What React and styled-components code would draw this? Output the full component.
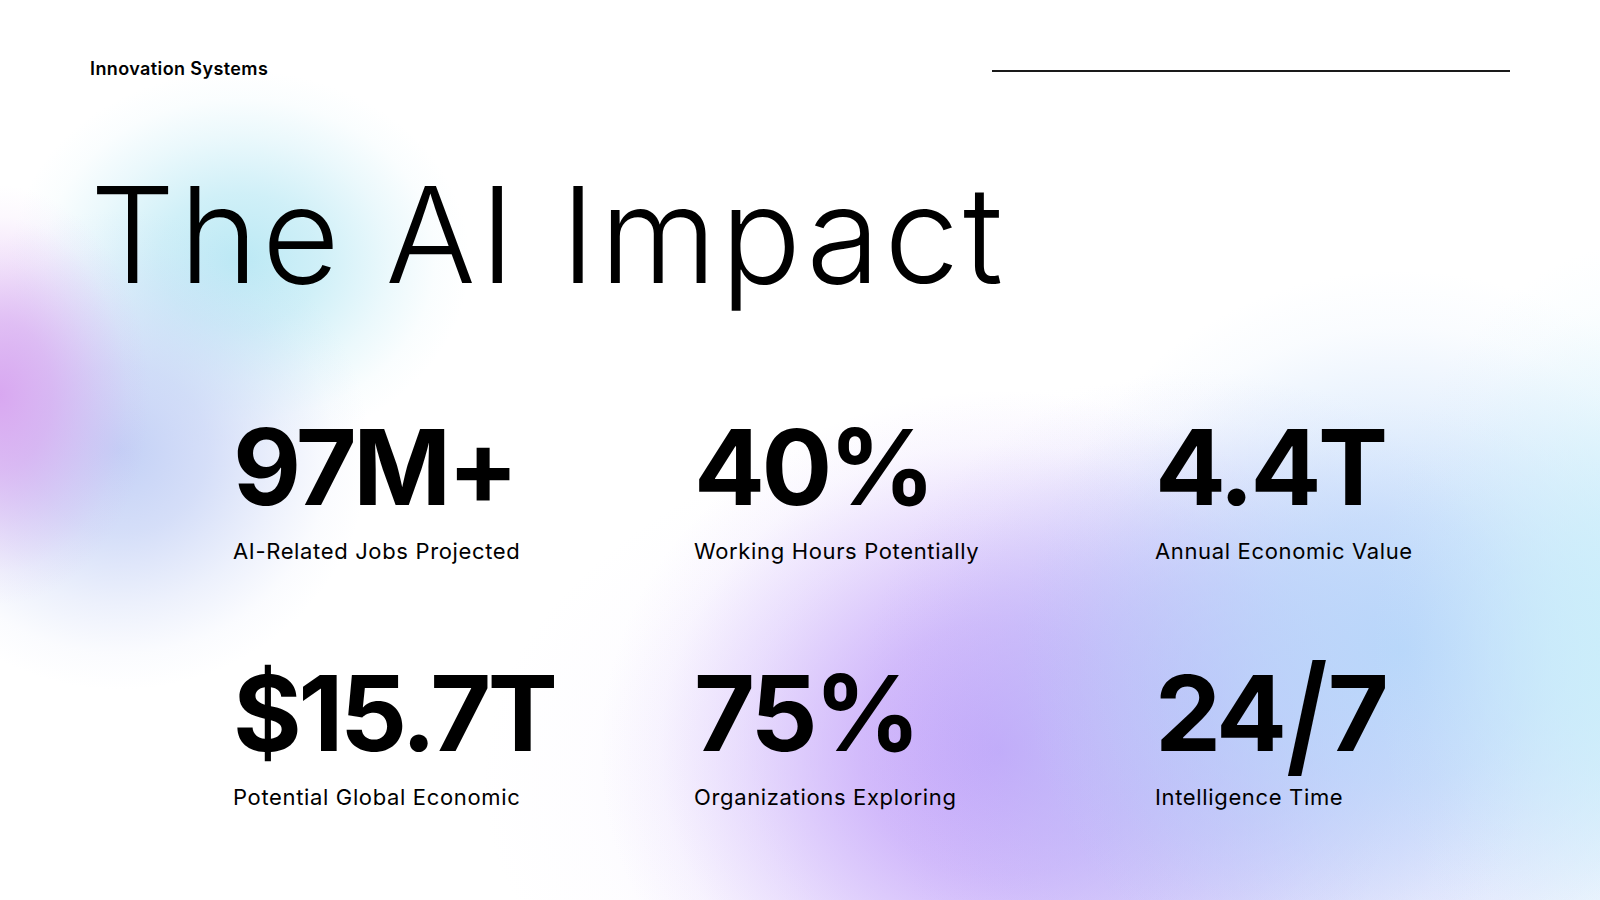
import React from "react";
import styled, { createGlobalStyle } from "styled-components";

const Global = createGlobalStyle`
  html, body { margin: 0; padding: 0; background: #fff; }
  body { font-family: "Inter", "Noto Sans", sans-serif; color: #000; }
`;

const blob = (w, h, x, y, r, g, b, a = 1) =>
  `radial-gradient(ellipse ${w}px ${h}px at ${x}px ${y}px, rgba(${r},${g},${b},${a}) 0%, rgba(${r},${g},${b},${a * 0.7}) 35%, rgba(${r},${g},${b},${a * 0.3}) 65%, rgba(${r},${g},${b},${a * 0.08}) 85%, rgba(${r},${g},${b},0) 100%)`;

const Page = styled.div`
  width: 1600px;
  height: 900px;
  box-sizing: border-box;
  padding: 60px 90px 0;
  overflow: hidden;
  display: flex;
  flex-direction: column;
  background:
    ${blob(150, 210, 0, 395, 216, 164, 240, 0.95)},
    ${blob(250, 240, 120, 450, 192, 206, 245, 0.95)},
    ${blob(230, 190, 240, 260, 184, 232, 244, 0.95)},
    ${blob(280, 400, 1650, 640, 200, 238, 250, 1)},
    ${blob(380, 380, 1400, 650, 184, 214, 250, 1)},
    ${blob(340, 340, 1200, 710, 188, 190, 248, 0.9)},
    ${blob(400, 360, 1000, 750, 196, 164, 250, 1)},
    ${blob(700, 400, 1180, 780, 226, 214, 252, 0.7)},
    #ffffff;
`;

const Header = styled.header`
  display: flex;
  align-items: center;
  justify-content: space-between;
  height: 18px;
`;

const Brand = styled.div`
  font-size: 18px;
  font-weight: 600;
  line-height: 1;
  letter-spacing: 0.4px;
`;

const Rule = styled.div`
  width: 518px;
  height: 2px;
  background: #1a1a1a;
  margin-top: 4px;
`;

const Title = styled.h1`
  margin: 89px 0 0;
  font-size: 134px;
  font-weight: 300;
  line-height: 1;
  letter-spacing: 4px;
`;

const Stats = styled.div`
  display: grid;
  grid-template-columns: repeat(3, 461px);
  row-gap: 98px;
  margin: 113px 0 0 143px;
`;

const Stat = styled.div`
  display: flex;
  flex-direction: column;
  gap: 21px;
`;

const Value = styled.div`
  font-size: 105px;
  font-weight: 700;
  line-height: 1;
  letter-spacing: -3.5px;
`;

const Slash = styled.span`
  display: inline-block;
  transform: scaleY(1.27);
  transform-origin: 50% 52%;
  margin: 0 4px 0 3px;
`;

const Label = styled.div`
  font-size: 22px;
  font-weight: 400;
  line-height: 1;
  letter-spacing: 0.65px;
`;

const stats = [
  { value: "97M+", label: "AI-Related Jobs Projected" },
  { value: "40%", label: "Working Hours Potentially" },
  { value: "4.4T", label: "Annual Economic Value" },
  { value: "$15.7T", label: "Potential Global Economic" },
  { value: "75%", label: "Organizations Exploring" },
  { value: "24/7", label: "Intelligence Time" },
];

const renderValue = (v) => {
  if (!v.includes("/")) return v;
  const [a, b] = v.split("/");
  return (
    <>
      {a}
      <Slash>/</Slash>
      {b}
    </>
  );
};

export default function App() {
  return (
    <>
      <Global />
      <Page>
        <Header>
          <Brand>Innovation Systems</Brand>
          <Rule />
        </Header>
        <Title>The AI Impact</Title>
        <Stats>
          {stats.map((s) => (
            <Stat key={s.value}>
              <Value>{renderValue(s.value)}</Value>
              <Label>{s.label}</Label>
            </Stat>
          ))}
        </Stats>
      </Page>
    </>
  );
}
